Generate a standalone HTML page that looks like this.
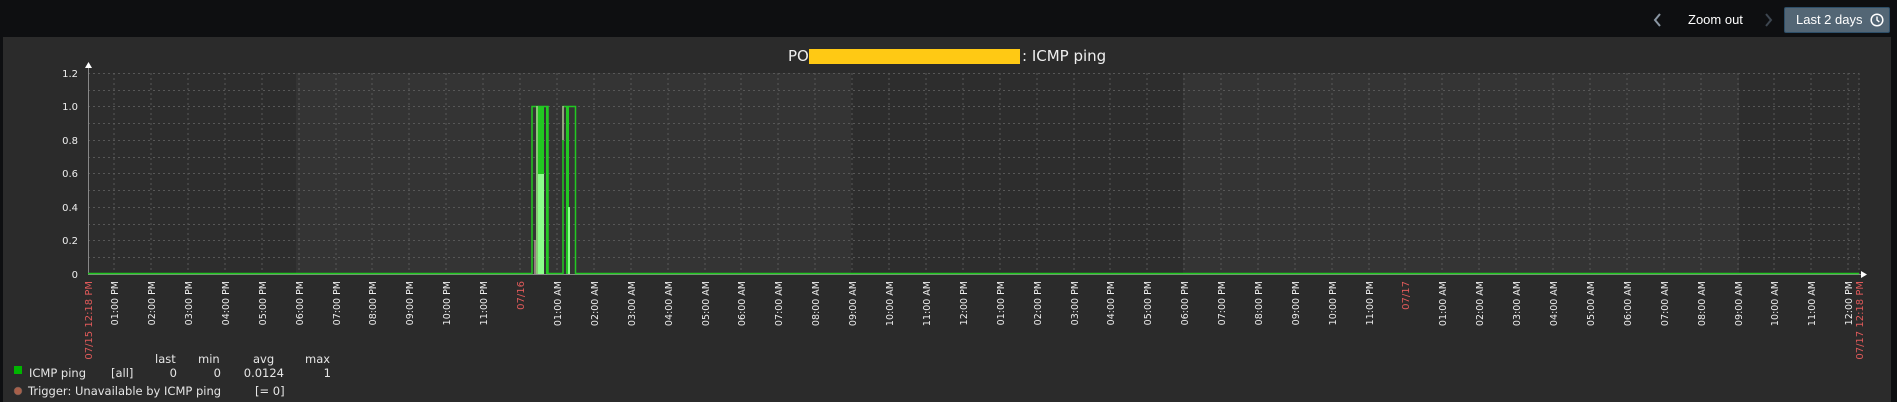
<!DOCTYPE html>
<html><head><meta charset="utf-8"><style>
html,body{margin:0;padding:0;background:#0e0f11;width:1897px;height:402px;overflow:hidden;font-family:"DejaVu Sans","Liberation Sans",sans-serif}
.top{position:absolute;left:0;top:0;width:1897px;height:37px;background:#0e0f11}
.zo{position:absolute;left:1688px;top:12px;color:#fff;font:13px "Liberation Sans",sans-serif}
.btn{position:absolute;left:1784px;top:7px;width:106px;height:26px;box-sizing:border-box;background:#536675;border:1px solid #2d4e68;border-radius:2px;color:#fff;font:13px "Liberation Sans",sans-serif;line-height:24px;padding-left:11px}
.panel{position:absolute;left:3px;top:37px;width:1888px;height:365px;background:#2b2b2b}
svg{position:absolute;left:0;top:0}
</style></head><body>
<div class="top"></div>
<svg width="1897" height="37"><path d="M1660 14 L1655 20 L1660 26" stroke="#8a96a3" stroke-width="2" fill="none"/><path d="M1766 14 L1771 20 L1766 26" stroke="#3d4650" stroke-width="2" fill="none"/></svg>
<div class="zo">Zoom out</div>
<div class="btn">Last 2 days<svg style="position:absolute;left:85px;top:5px" width="14" height="14"><circle cx="7" cy="7" r="5.8" stroke="#fff" stroke-width="1.5" fill="none"/><path d="M7 3.5V7L9.3 9" stroke="#fff" stroke-width="1.4" fill="none"/></svg></div>
<div class="panel"></div>
<svg width="1897" height="402" font-family="DejaVu Sans, sans-serif">
<rect x="88" y="73" width="1771" height="201" fill="#2d2d2d"/>
<rect x="296" y="73" width="555" height="201" fill="#343434"/>
<rect x="1183" y="73" width="556" height="201" fill="#343434"/>
<g stroke="#575757" stroke-dasharray="2,3" stroke-width="1">
<path d="M88 73.5H1859M88 90.5H1859M88 106.5H1859M88 123.5H1859M88 140.5H1859M88 157.5H1859M88 173.5H1859M88 190.5H1859M88 207.5H1859M88 224.5H1859M88 240.5H1859M88 257.5H1859"/>
<path d="M114 73V274M151 73V274M188 73V274M225 73V274M262 73V274M299 73V274M336 73V274M372 73V274M409 73V274M446 73V274M483 73V274M520 73V274M557 73V274M594 73V274M631 73V274M668 73V274M705 73V274M741 73V274M778 73V274M815 73V274M852 73V274M889 73V274M926 73V274M963 73V274M1000 73V274M1037 73V274M1074 73V274M1110 73V274M1147 73V274M1184 73V274M1221 73V274M1258 73V274M1295 73V274M1332 73V274M1369 73V274M1405 73V274M1442 73V274M1479 73V274M1516 73V274M1553 73V274M1590 73V274M1627 73V274M1664 73V274M1701 73V274M1738 73V274M1774 73V274M1811 73V274M1848 73V274M1859 73V274"/>
</g>
<path d="M88.5 64V274M88 274.5H1866" stroke="#888" stroke-width="1"/>
<path d="M85 68L88.5 62L92 68Z M1861 271L1867 274.5L1861 278Z" fill="#fff"/>
<g fill="#22c822"><rect x="536" y="106" width="3" height="168"/><rect x="539" y="106" width="5" height="168"/><rect x="546" y="106" width="2" height="168"/><rect x="566" y="106" width="3" height="168"/></g>
<g fill="#8cff8c"><rect x="538" y="174" width="3" height="100"/><rect x="541" y="174" width="3" height="100"/><rect x="568" y="207" width="2" height="67"/></g>
<path d="M88 273.5H532V106.5H548V273.5H563V106.5H575.5V273.5H1859" stroke="#22c822" stroke-width="1.5" fill="none"/>
<path d="M535 240V274M537 106V274M563 106V140" stroke="#f0c8c8" stroke-width="1"/>
<text x="788" y="61" fill="#eee" font-size="15">PO</text>
<rect x="809" y="49" width="211" height="15" fill="#ffc914"/>
<text x="1022" y="61" fill="#eee" font-size="15">: ICMP ping</text>
<g fill="#eee" font-size="10" text-anchor="end">
<text x="78" y="77">1.2</text><text x="78" y="110">1.0</text><text x="78" y="144">0.8</text><text x="78" y="177">0.6</text><text x="78" y="211">0.4</text><text x="78" y="244">0.2</text><text x="78" y="278">0</text>
</g>
<g fill="#eee" font-size="9.5" text-anchor="end">
<text transform="translate(118,281) rotate(-90)">01:00 PM</text>
<text transform="translate(155,281) rotate(-90)">02:00 PM</text>
<text transform="translate(192,281) rotate(-90)">03:00 PM</text>
<text transform="translate(229,281) rotate(-90)">04:00 PM</text>
<text transform="translate(266,281) rotate(-90)">05:00 PM</text>
<text transform="translate(303,281) rotate(-90)">06:00 PM</text>
<text transform="translate(340,281) rotate(-90)">07:00 PM</text>
<text transform="translate(376,281) rotate(-90)">08:00 PM</text>
<text transform="translate(413,281) rotate(-90)">09:00 PM</text>
<text transform="translate(450,281) rotate(-90)">10:00 PM</text>
<text transform="translate(487,281) rotate(-90)">11:00 PM</text>
<text transform="translate(561,281) rotate(-90)">01:00 AM</text>
<text transform="translate(598,281) rotate(-90)">02:00 AM</text>
<text transform="translate(635,281) rotate(-90)">03:00 AM</text>
<text transform="translate(672,281) rotate(-90)">04:00 AM</text>
<text transform="translate(709,281) rotate(-90)">05:00 AM</text>
<text transform="translate(745,281) rotate(-90)">06:00 AM</text>
<text transform="translate(782,281) rotate(-90)">07:00 AM</text>
<text transform="translate(819,281) rotate(-90)">08:00 AM</text>
<text transform="translate(856,281) rotate(-90)">09:00 AM</text>
<text transform="translate(893,281) rotate(-90)">10:00 AM</text>
<text transform="translate(930,281) rotate(-90)">11:00 AM</text>
<text transform="translate(967,281) rotate(-90)">12:00 PM</text>
<text transform="translate(1004,281) rotate(-90)">01:00 PM</text>
<text transform="translate(1041,281) rotate(-90)">02:00 PM</text>
<text transform="translate(1078,281) rotate(-90)">03:00 PM</text>
<text transform="translate(1114,281) rotate(-90)">04:00 PM</text>
<text transform="translate(1151,281) rotate(-90)">05:00 PM</text>
<text transform="translate(1188,281) rotate(-90)">06:00 PM</text>
<text transform="translate(1225,281) rotate(-90)">07:00 PM</text>
<text transform="translate(1262,281) rotate(-90)">08:00 PM</text>
<text transform="translate(1299,281) rotate(-90)">09:00 PM</text>
<text transform="translate(1336,281) rotate(-90)">10:00 PM</text>
<text transform="translate(1373,281) rotate(-90)">11:00 PM</text>
<text transform="translate(1446,281) rotate(-90)">01:00 AM</text>
<text transform="translate(1483,281) rotate(-90)">02:00 AM</text>
<text transform="translate(1520,281) rotate(-90)">03:00 AM</text>
<text transform="translate(1557,281) rotate(-90)">04:00 AM</text>
<text transform="translate(1594,281) rotate(-90)">05:00 AM</text>
<text transform="translate(1631,281) rotate(-90)">06:00 AM</text>
<text transform="translate(1668,281) rotate(-90)">07:00 AM</text>
<text transform="translate(1705,281) rotate(-90)">08:00 AM</text>
<text transform="translate(1742,281) rotate(-90)">09:00 AM</text>
<text transform="translate(1778,281) rotate(-90)">10:00 AM</text>
<text transform="translate(1815,281) rotate(-90)">11:00 AM</text>
<text transform="translate(1852,281) rotate(-90)">12:00 PM</text>
</g>
<g fill="#e05a5a" font-size="10" text-anchor="end">
<text transform="translate(92,281) rotate(-90)">07/15 12:18 PM</text>
<text transform="translate(524,281) rotate(-90)">07/16</text>
<text transform="translate(1409,281) rotate(-90)">07/17</text>
<text transform="translate(1863,281) rotate(-90)">07/17 12:18 PM</text>
</g>
<g fill="#e6e6e6" font-size="11.5">
<text x="155" y="363">last</text><text x="198" y="363">min</text><text x="253" y="363">avg</text><text x="305" y="363">max</text>
<rect x="14" y="366" width="8" height="8" fill="#00b400"/>
<text x="29" y="377">ICMP ping</text><text x="111" y="377">[all]</text>
<text x="177" y="377" text-anchor="end">0</text><text x="221" y="377" text-anchor="end">0</text><text x="284" y="377" text-anchor="end">0.0124</text><text x="331" y="377" text-anchor="end">1</text>
<circle cx="18" cy="391" r="4" fill="#a8604a" stroke="#555" stroke-width="0.5"/>
<text x="28" y="395">Trigger: Unavailable by ICMP ping</text><text x="255" y="395">[= 0]</text>
</g>
</svg>
</body></html>
